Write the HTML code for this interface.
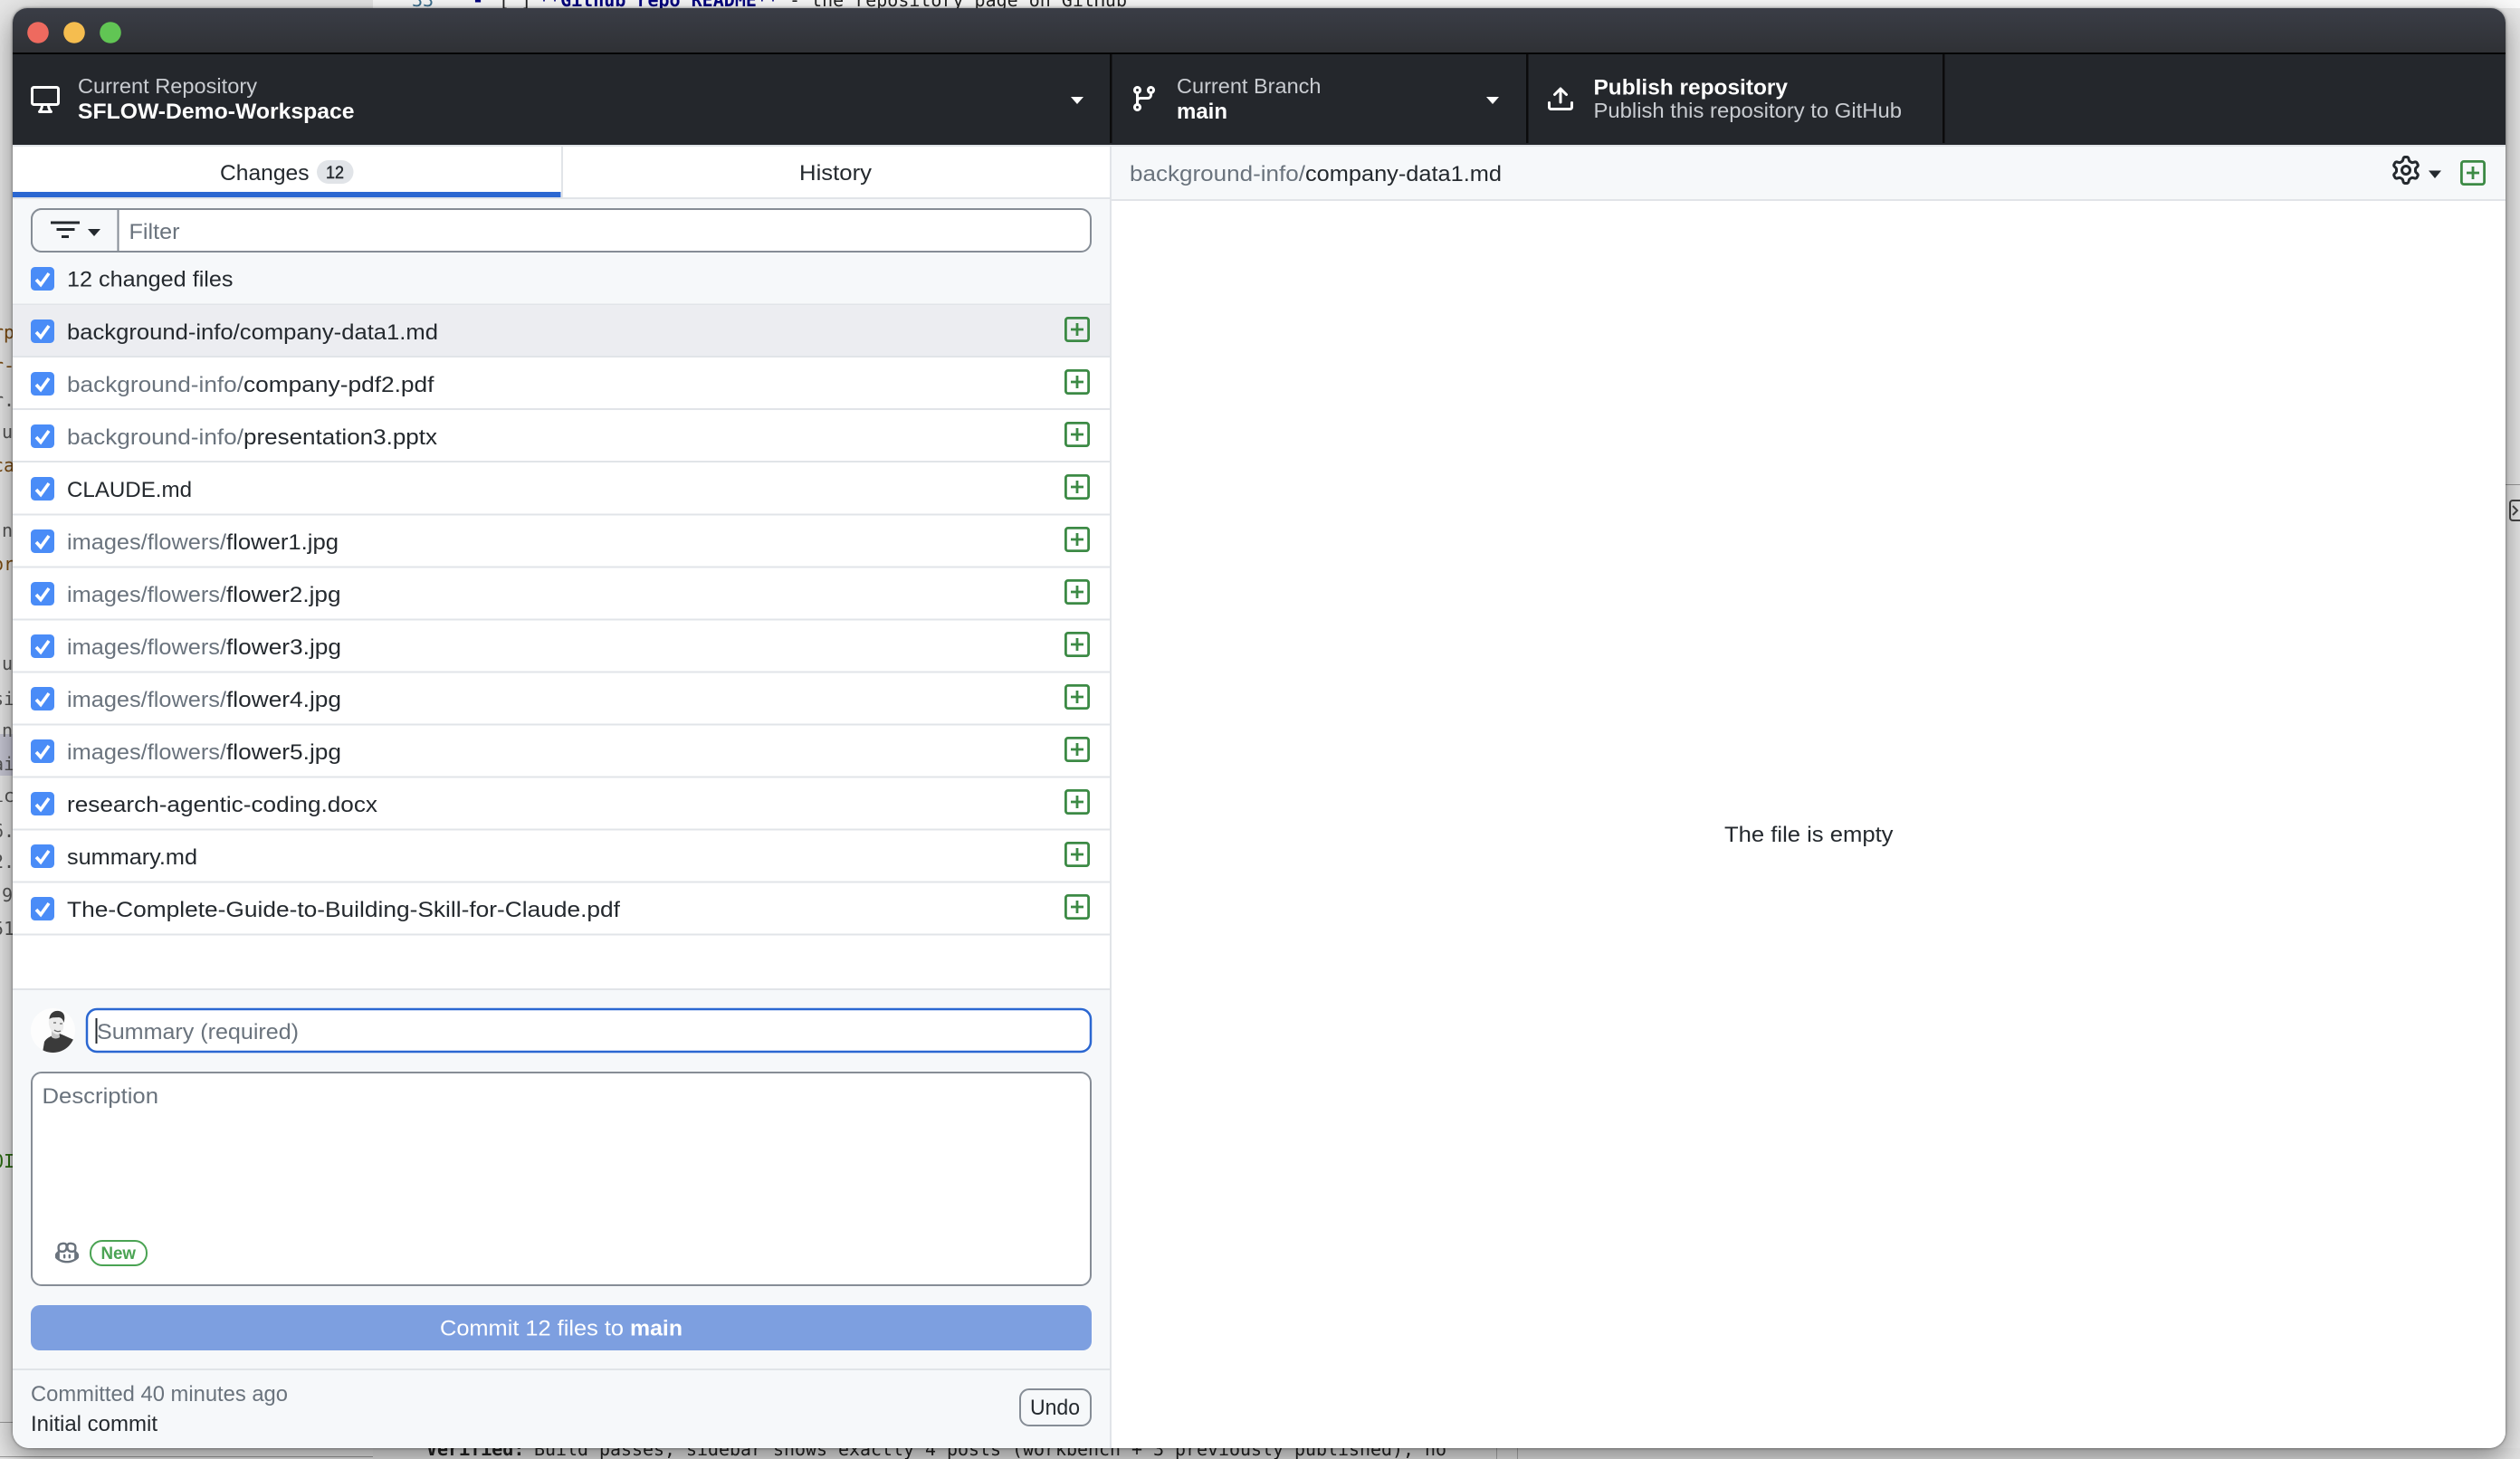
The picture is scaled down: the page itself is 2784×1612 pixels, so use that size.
<!DOCTYPE html>
<html lang="en">
<head>
<meta charset="utf-8">
<title>GitHub Desktop</title>
<style>
html,body{margin:0;padding:0;width:2784px;height:1612px;overflow:hidden;background:#ececec}
#bg{position:absolute;left:0;top:0;width:2784px;height:1612px}
#win{position:absolute;left:14px;top:9px;width:2754px;height:1591px;border-radius:16px 16px 18px 18px;overflow:hidden;background:#fff;box-shadow:0 10px 30px rgba(0,0,0,.42),0 0 3px rgba(0,0,0,.5)}
#ui{position:absolute;left:-14px;top:-9px;width:2784px;height:1612px}
text{font-family:"Liberation Sans",sans-serif;font-size:24px;fill:#24292e}
.m{font-family:"DejaVu Sans Mono",monospace;font-size:20px}
.b{font-weight:700}
.g{fill:#6a737d}
.h{fill:#c9ccd1;font-size:23.5px}
.w{fill:#fff}
</style>
</head>
<body>
<svg id="bg" viewBox="0 0 2784 1612" xmlns="http://www.w3.org/2000/svg">
<rect width="2784" height="1612" fill="#e6e6e6"/>
<rect x="412" y="0" width="2372" height="9" fill="#fafafa"/>
<rect x="412" y="1600" width="2372" height="12" fill="#e2e2e2"/>
<rect x="0" y="1609" width="412" height="1" fill="#999"/>
<rect x="0" y="1571" width="14" height="1" fill="#999"/>
<rect x="1653" y="1600" width="1" height="12" fill="#aaa"/>
<rect x="1676" y="1600" width="1" height="12" fill="#aaa"/>
<rect x="2768" y="535" width="16" height="1" fill="#999"/>
<rect x="2773" y="553" width="20" height="22" rx="3" fill="none" stroke="#444" stroke-width="2"/>
<path d="M2776 559l5 5-5 5" fill="none" stroke="#444" stroke-width="2"/>
<text class="m" x="455" y="7" style="fill:#3a6d8c">33</text>
<text class="m b" x="522" y="7" style="fill:#00007f">-</text>
<text class="m" x="551" y="7" style="fill:#222">[ ]</text>
<text class="m b" x="595" y="7" textLength="265" lengthAdjust="spacingAndGlyphs" style="fill:#00007f">**Github repo README**</text>
<text class="m" x="872" y="7" textLength="373" lengthAdjust="spacingAndGlyphs" style="fill:#222">- the repository page on GitHub</text>
<text class="m b" x="471" y="1608" style="fill:#222">Verified:</text>
<text class="m" x="590" y="1608" textLength="1008" lengthAdjust="spacingAndGlyphs" style="fill:#222">Build passes, sidebar shows exactly 4 posts (workbench + 3 previously published), no</text>
<rect x="0" y="811" width="14" height="46" fill="#c6c6d4"/>
<g>
<text class="m" x="-8" y="374" style="fill:#7a4a10">rp</text>
<text class="m" x="-8" y="411" style="fill:#7a4a10">r-</text>
<text class="m" x="-8" y="449" style="fill:#555">r.</text>
<text class="m" x="2" y="484" style="fill:#555">u</text>
<text class="m" x="-8" y="521" style="fill:#7a4a10">ca</text>
<text class="m" x="2" y="593" style="fill:#555">n</text>
<text class="m" x="-8" y="630" style="fill:#7a4a10">or</text>
<text class="m" x="2" y="740" style="fill:#555">u</text>
<text class="m" x="-8" y="779" style="fill:#555">si</text>
<text class="m" x="2" y="814" style="fill:#555">n</text>
<text class="m" x="-8" y="851" style="fill:#555">ai</text>
<text class="m" x="-8" y="886" style="fill:#555">ic</text>
<text class="m" x="-8" y="925" style="fill:#555">6.</text>
<text class="m" x="-8" y="959" style="fill:#555">2.</text>
<text class="m" x="2" y="996" style="fill:#555">9</text>
<text class="m" x="-8" y="1033" style="fill:#555">51</text>
<text class="m" x="-8" y="1290" style="fill:#2a6a10">OI</text>
</g>
</svg>

<div id="win">
<svg id="ui" viewBox="0 0 2784 1612" xmlns="http://www.w3.org/2000/svg">
<defs>
<linearGradient id="tb" x1="0" y1="0" x2="0" y2="1"><stop offset="0" stop-color="#3a3d46"/><stop offset="1" stop-color="#2f3135"/></linearGradient>
<symbol id="cb" width="26" height="26" viewBox="0 0 26 26" overflow="visible">
<rect width="26" height="26" rx="4.5" fill="#4a8cf7"/>
<path d="M6 14l5 5.5L20 7" fill="none" stroke="#fff" stroke-width="3.6"/>
</symbol>
<symbol id="pl" width="28" height="28" viewBox="0 0 28 28" overflow="visible">
<rect x="1.4" y="1.4" width="25.2" height="25.2" rx="2.5" fill="none" stroke="#3c8a45" stroke-width="2.8"/>
<path d="M7 14h14M14 7v14" fill="none" stroke="#3c8a45" stroke-width="2.8"/>
</symbol>
</defs>

<!-- title bar -->
<rect x="14" y="9" width="2754" height="50" fill="url(#tb)"/>
<rect x="14" y="58" width="2754" height="2" fill="#050505"/>
<circle cx="42" cy="36" r="11.8" fill="#ee6a5f"/>
<circle cx="82" cy="36" r="11.8" fill="#f5bd4f"/>
<circle cx="122" cy="36" r="11.8" fill="#61c554"/>

<!-- toolbar -->
<rect x="14" y="60" width="2754" height="100" fill="#24272c"/>
<rect x="1226" y="60" width="2.5" height="98" fill="#0b0b0c"/>
<rect x="1686" y="60" width="2.5" height="98" fill="#0b0b0c"/>
<rect x="2146" y="60" width="2.5" height="98" fill="#0b0b0c"/>

<path transform="translate(34 93) scale(2)" fill="#fff" d="M14.25 1c.966 0 1.75.784 1.75 1.75v7.5A1.75 1.75 0 0 1 14.25 12h-3.727c.099 1.041.52 1.872 1.292 2.757A.752.752 0 0 1 11.25 16h-6.5a.75.75 0 0 1-.565-1.243c.772-.885 1.192-1.716 1.292-2.757H1.75A1.75 1.75 0 0 1 0 10.25v-7.5C0 1.784.784 1 1.75 1ZM1.75 2.5a.25.25 0 0 0-.25.25v7.5c0 .138.112.25.25.25h12.5a.25.25 0 0 0 .25-.25v-7.5a.25.25 0 0 0-.25-.25ZM9.018 12H6.982a5.293 5.293 0 0 1-.765 2.5h3.566a5.293 5.293 0 0 1-.765-2.5Z"/>
<text class="h" x="86" y="103" textLength="198" lengthAdjust="spacingAndGlyphs">Current Repository</text>
<text class="w b" x="86" y="131" textLength="305.5" lengthAdjust="spacingAndGlyphs">SFLOW-Demo-Workspace</text>
<path d="M1183 107h14l-7 8z" fill="#fff"/>

<path transform="translate(1248 93) scale(2)" fill="#fff" d="M9.5 3.25a2.25 2.25 0 1 1 3 2.122V6A2.5 2.5 0 0 1 10 8.5H6a1 1 0 0 0-1 1v1.128a2.251 2.251 0 1 1-1.5 0V5.372a2.25 2.25 0 1 1 1.5 0v1.836A2.493 2.493 0 0 1 6 7h4a1 1 0 0 0 1-1v-.628A2.25 2.25 0 0 1 9.5 3.25Zm-6 0a.75.75 0 1 0 1.5 0 .75.75 0 0 0-1.5 0Zm8.25-.75a.75.75 0 1 0 0 1.5.75.75 0 0 0 0-1.5ZM4.25 12a.75.75 0 1 0 0 1.5.75.75 0 0 0 0-1.5Z"/>
<text class="h" x="1300" y="103" textLength="159.5" lengthAdjust="spacingAndGlyphs">Current Branch</text>
<text class="w b" x="1300" y="131" textLength="56" lengthAdjust="spacingAndGlyphs">main</text>
<path d="M1642 107h14l-7 8z" fill="#fff"/>

<g transform="translate(1708 94) scale(2)" fill="#fff">
<path d="M2.75 14A1.75 1.75 0 0 1 1 12.25v-2.5a.75.75 0 0 1 1.5 0v2.5c0 .138.112.25.25.25h10.5a.25.25 0 0 0 .25-.25v-2.5a.75.75 0 0 1 1.5 0v2.5A1.75 1.75 0 0 1 13.25 14Z"/>
<path d="M11.78 4.72a.749.749 0 1 1-1.06 1.06L8.75 3.811V9.5a.75.75 0 0 1-1.5 0V3.811L5.28 5.78a.749.749 0 1 1-1.06-1.06l3.25-3.25a.749.749 0 0 1 1.06 0l3.25 3.25Z"/>
</g>
<text class="w b" x="1760.5" y="104.5" textLength="214.5" lengthAdjust="spacingAndGlyphs">Publish repository</text>
<text class="h" x="1760.5" y="130" textLength="340.5" lengthAdjust="spacingAndGlyphs">Publish this repository to GitHub</text>

<!-- strip under toolbar -->
<rect x="14" y="160" width="2754" height="2" fill="#e1e4e8"/>

<!-- left panel -->
<rect x="14" y="162" width="1212" height="58" fill="#fff"/>
<rect x="14" y="218" width="1212" height="2" fill="#e1e4e8"/>
<rect x="620" y="162" width="2" height="56" fill="#e1e4e8"/>
<rect x="14" y="212" width="605.5" height="6" fill="#2b67d1"/>
<text x="243" y="199" textLength="98.5" lengthAdjust="spacingAndGlyphs">Changes</text>
<rect x="350" y="177" width="40.5" height="26" rx="13" fill="#e1e4e8"/>
<text x="360" y="197" textLength="20" lengthAdjust="spacingAndGlyphs" style="font-size:19px;stroke:#24292e;stroke-width:.4">12</text>
<text x="883" y="199" textLength="80" lengthAdjust="spacingAndGlyphs">History</text>

<rect x="14" y="220" width="1212" height="117" fill="#f6f8fa"/>
<rect x="35" y="231" width="1170" height="47" rx="11" fill="#fff" stroke="#868d96" stroke-width="2"/>
<path d="M46 231H130.500V278H46a11 11 0 0 1-11-11V242a11 11 0 0 1 11-11Z" fill="#f6f8fa" stroke="#868d96" stroke-width="2"/>
<path d="M56 246h32M62.500 253.500h20M68 261.500h8" fill="none" stroke="#24292e" stroke-width="3"/>
<path d="M97 253h14l-7 8z" fill="#24292e"/>
<text class="g" x="142.5" y="264" textLength="56" lengthAdjust="spacingAndGlyphs">Filter</text>
<use href="#cb" x="34" y="295"/>
<text x="74" y="316.500" textLength="183.5" lengthAdjust="spacingAndGlyphs">12 changed files</text>
<rect x="14" y="335.500" width="1212" height="2" fill="#e1e4e8"/>

<!-- file list -->
<rect x="14" y="337" width="1212" height="755" fill="#fff"/>
<rect x="14" y="337" width="1212" height="56" fill="#ecedf1"/>
<g fill="#e1e4e8">
<rect x="14" y="393" width="1212" height="2"/>
<rect x="14" y="451" width="1212" height="2"/>
<rect x="14" y="509" width="1212" height="2"/>
<rect x="14" y="567.500" width="1212" height="2"/>
<rect x="14" y="625.500" width="1212" height="2"/>
<rect x="14" y="683.500" width="1212" height="2"/>
<rect x="14" y="741.500" width="1212" height="2"/>
<rect x="14" y="799.500" width="1212" height="2"/>
<rect x="14" y="857.500" width="1212" height="2"/>
<rect x="14" y="915.500" width="1212" height="2"/>
<rect x="14" y="973.500" width="1212" height="2"/>
<rect x="14" y="1031.500" width="1212" height="2"/>
</g>

<use href="#cb" x="34" y="353"/><use href="#pl" x="1176" y="350"/>
<text x="74" y="375" textLength="410" lengthAdjust="spacingAndGlyphs">background-info/company-data1.md</text>

<use href="#cb" x="34" y="411"/><use href="#pl" x="1176" y="408"/>
<text class="g" x="74" y="433" textLength="195" lengthAdjust="spacingAndGlyphs">background-info/</text>
<text x="269" y="433" textLength="210.500" lengthAdjust="spacingAndGlyphs">company-pdf2.pdf</text>

<use href="#cb" x="34" y="469"/><use href="#pl" x="1176" y="466"/>
<text class="g" x="74" y="491" textLength="195" lengthAdjust="spacingAndGlyphs">background-info/</text>
<text x="269" y="491" textLength="214" lengthAdjust="spacingAndGlyphs">presentation3.pptx</text>

<use href="#cb" x="34" y="527"/><use href="#pl" x="1176" y="524"/>
<text x="74" y="549" textLength="138" lengthAdjust="spacingAndGlyphs">CLAUDE.md</text>

<use href="#cb" x="34" y="585"/><use href="#pl" x="1176" y="582"/>
<text class="g" x="74" y="607" textLength="176" lengthAdjust="spacingAndGlyphs">images/flowers/</text>
<text x="250" y="607" textLength="124" lengthAdjust="spacingAndGlyphs">flower1.jpg</text>

<use href="#cb" x="34" y="643"/><use href="#pl" x="1176" y="640"/>
<text class="g" x="74" y="665" textLength="176" lengthAdjust="spacingAndGlyphs">images/flowers/</text>
<text x="250" y="665" textLength="126.5" lengthAdjust="spacingAndGlyphs">flower2.jpg</text>

<use href="#cb" x="34" y="701"/><use href="#pl" x="1176" y="698"/>
<text class="g" x="74" y="723" textLength="176" lengthAdjust="spacingAndGlyphs">images/flowers/</text>
<text x="250" y="723" textLength="127" lengthAdjust="spacingAndGlyphs">flower3.jpg</text>

<use href="#cb" x="34" y="759"/><use href="#pl" x="1176" y="756"/>
<text class="g" x="74" y="781" textLength="176" lengthAdjust="spacingAndGlyphs">images/flowers/</text>
<text x="250" y="781" textLength="127" lengthAdjust="spacingAndGlyphs">flower4.jpg</text>

<use href="#cb" x="34" y="817"/><use href="#pl" x="1176" y="814"/>
<text class="g" x="74" y="839" textLength="176" lengthAdjust="spacingAndGlyphs">images/flowers/</text>
<text x="250" y="839" textLength="127" lengthAdjust="spacingAndGlyphs">flower5.jpg</text>

<use href="#cb" x="34" y="875"/><use href="#pl" x="1176" y="872"/>
<text x="74" y="897" textLength="343" lengthAdjust="spacingAndGlyphs">research-agentic-coding.docx</text>

<use href="#cb" x="34" y="933"/><use href="#pl" x="1176" y="930"/>
<text x="74" y="955" textLength="144" lengthAdjust="spacingAndGlyphs">summary.md</text>

<use href="#cb" x="34" y="991"/><use href="#pl" x="1176" y="988"/>
<text x="74" y="1013" textLength="611" lengthAdjust="spacingAndGlyphs">The-Complete-Guide-to-Building-Skill-for-Claude.pdf</text>

<!-- commit panel -->
<rect x="14" y="1092" width="1212" height="508" fill="#f6f8fa"/>
<rect x="14" y="1092" width="1212" height="2" fill="#e1e4e8"/>
<circle cx="58.500" cy="1138.500" r="24.500" fill="#fdfdfd"/>
<clipPath id="av"><circle cx="58.500" cy="1138.500" r="24.500"/></clipPath>
<g clip-path="url(#av)">
<path d="M47 1163l2-12c3-5 8-6 11-8l6-1c5 2 11 5 16 7l-3 14z" fill="#3a3a3a"/>
<path d="M57 1136l8 2 1 8c-3 2-6 2-9 0z" fill="#c4c4c4"/>
<ellipse cx="62" cy="1131" rx="8" ry="12" fill="#ececec" transform="rotate(-12 62 1131)"/>
<path d="M54.500 1126c0-6 5-10 10.500-9 6 1 7.500 6 5.500 13-1-4-3-6-6-6-4 .5-7-.5-10 2z" fill="#3a3a3a"/>
<path d="M59 1130h3M66 1131h3M60 1138c2 2 5 2 7 1" fill="none" stroke="#666" stroke-width="1.300"/>
</g>
<rect x="96" y="1115" width="1109" height="47" rx="11" fill="#fff" stroke="#2b67d1" stroke-width="2.500"/>
<text class="g" x="107" y="1148" textLength="223" lengthAdjust="spacingAndGlyphs">Summary (required)</text>
<rect x="105.500" y="1125" width="2" height="28" fill="#24292e"/>
<rect x="35" y="1185" width="1170" height="235" rx="11" fill="#fff" stroke="#868d96" stroke-width="2"/>
<text class="g" x="46.5" y="1219" textLength="128.5" lengthAdjust="spacingAndGlyphs">Description</text>
<g transform="translate(61 1371) scale(1.625)" fill="#6a737d">
<path d="M7.998 15.035c-4.562 0-7.873-2.914-7.998-3.749V9.338c.085-.628.677-1.686 1.588-2.065.013-.07.024-.143.036-.218.029-.183.06-.384.126-.612-.201-.508-.254-1.084-.254-1.656 0-.87.128-1.769.693-2.484.579-.733 1.494-1.124 2.724-1.261 1.206-.134 2.262.034 2.944.765.05.053.096.108.139.165.044-.057.094-.112.143-.165.682-.731 1.738-.899 2.944-.765 1.23.137 2.145.528 2.724 1.261.566.715.693 1.614.693 2.484 0 .572-.053 1.148-.254 1.656.066.228.098.429.126.612.012.076.024.148.037.218.924.385 1.522 1.471 1.591 2.095v1.872c0 .766-3.351 3.795-8.002 3.795Zm0-1.485c2.28 0 4.584-1.11 5.002-1.433V7.862l-.023-.116c-.49.21-1.075.291-1.727.291-1.146 0-2.059-.327-2.71-.991A3.222 3.222 0 0 1 8 6.303a3.24 3.24 0 0 1-.544.743c-.65.664-1.563.991-2.71.991-.652 0-1.236-.081-1.727-.291l-.023.116v4.255c.419.323 2.722 1.433 5.002 1.433ZM6.762 2.83c-.193-.206-.637-.413-1.682-.297-1.019.113-1.479.404-1.713.7-.247.312-.369.789-.369 1.554 0 .793.129 1.171.308 1.371.162.181.519.379 1.442.379.853 0 1.339-.235 1.638-.54.315-.322.527-.827.617-1.553.117-.935-.037-1.395-.241-1.614Zm4.155-.297c-1.044-.116-1.488.091-1.681.297-.204.219-.359.679-.242 1.614.091.726.303 1.231.618 1.553.299.305.784.54 1.638.54.922 0 1.28-.198 1.442-.379.179-.2.308-.578.308-1.371 0-.765-.123-1.242-.37-1.554-.233-.296-.693-.587-1.713-.7Z"/>
<path d="M6.25 9.037a.75.75 0 0 1 .75.75v1.501a.75.75 0 0 1-1.5 0V9.787a.75.75 0 0 1 .75-.75Zm4.25.75v1.501a.75.75 0 0 1-1.5 0V9.787a.75.75 0 0 1 1.500 0Z"/>
</g>
<rect x="100" y="1371" width="62" height="27" rx="13" fill="#fff" stroke="#4aa353" stroke-width="2"/>
<text class="b" x="111.500" y="1391" textLength="38.500" lengthAdjust="spacingAndGlyphs" style="font-size:19px;fill:#4aa353">New</text>
<rect x="34" y="1442" width="1172" height="50" rx="10" fill="#7d9fe0"/>
<text class="w" x="486" y="1475.500" textLength="203" lengthAdjust="spacingAndGlyphs">Commit 12 files to</text>
<text class="w b" x="696" y="1475.500" textLength="58" lengthAdjust="spacingAndGlyphs">main</text>
<rect x="14" y="1512" width="1212" height="2" fill="#e1e4e8"/>
<text class="g" x="34" y="1548" textLength="284" lengthAdjust="spacingAndGlyphs">Committed 40 minutes ago</text>
<text x="34" y="1581" textLength="140" lengthAdjust="spacingAndGlyphs">Initial commit</text>
<rect x="1127" y="1535" width="78" height="40" rx="10" fill="#f6f8fa" stroke="#868d96" stroke-width="2"/>
<text x="1138" y="1563" textLength="55" lengthAdjust="spacingAndGlyphs">Undo</text>

<!-- right panel -->
<rect x="1226" y="162" width="2" height="1438" fill="#e1e4e8"/>
<rect x="1228" y="162" width="1540" height="58" fill="#f6f8fa"/>
<rect x="1228" y="220" width="1540" height="2" fill="#e1e4e8"/>
<rect x="1228" y="222" width="1540" height="1378" fill="#fff"/>
<text class="g" x="1248" y="200" textLength="194" lengthAdjust="spacingAndGlyphs">background-info/</text>
<text x="1442" y="200" textLength="217" lengthAdjust="spacingAndGlyphs">company-data1.md</text>
<path transform="translate(2642 172) scale(2)" fill="#24292e" d="M8 0a8.2 8.2 0 0 1 .701.031C9.444.095 9.99.645 10.16 1.29l.288 1.107c.018.066.079.158.212.224.231.114.454.243.668.386.123.082.233.09.299.071l1.103-.303c.644-.176 1.392.021 1.82.63.27.385.506.792.704 1.218.315.675.111 1.422-.364 1.891l-.814.806c-.049.048-.098.147-.088.294.016.257.016.515 0 .772-.01.147.038.246.088.294l.814.806c.475.469.679 1.216.364 1.891a7.977 7.977 0 0 1-.704 1.217c-.428.61-1.176.807-1.82.63l-1.102-.302c-.067-.019-.177-.011-.3.071a5.909 5.909 0 0 1-.668.386c-.133.066-.194.158-.211.224l-.29 1.106c-.168.646-.715 1.196-1.458 1.26a8.006 8.006 0 0 1-1.402 0c-.743-.064-1.289-.614-1.458-1.26l-.289-1.106c-.018-.066-.079-.158-.212-.224a5.738 5.738 0 0 1-.668-.386c-.123-.082-.233-.09-.299-.071l-1.103.303c-.644.176-1.392-.021-1.82-.63a8.12 8.12 0 0 1-.704-1.218c-.315-.675-.111-1.422.363-1.891l.815-.806c.05-.048.098-.147.088-.294a6.214 6.214 0 0 1 0-.772c.01-.147-.038-.246-.088-.294l-.815-.806C.635 6.045.431 5.298.746 4.623a7.92 7.92 0 0 1 .704-1.217c.428-.61 1.176-.807 1.82-.63l1.102.302c.067.019.177.011.3-.071.214-.143.437-.272.668-.386.133-.066.194-.158.211-.224l.29-1.106C6.009.645 6.556.095 7.299.03 7.53.01 7.764 0 8 0Zm-.571 1.525c-.036.003-.108.036-.137.146l-.289 1.105c-.147.561-.549.967-.998 1.189-.173.086-.34.183-.5.29-.417.278-.97.423-1.529.27l-1.103-.303c-.109-.03-.175.016-.195.045-.22.312-.412.644-.573.99-.014.031-.021.11.059.19l.815.806c.411.406.562.957.53 1.456a4.709 4.709 0 0 0 0 .582c.032.499-.119 1.05-.53 1.456l-.815.806c-.081.08-.073.159-.059.19.162.346.353.677.573.989.02.03.085.076.195.046l1.102-.303c.56-.153 1.113-.008 1.53.27.161.107.328.204.501.29.447.222.85.629.997 1.189l.289 1.105c.029.109.101.143.137.146a6.6 6.6 0 0 0 1.142 0c.036-.003.108-.036.137-.146l.289-1.105c.147-.561.549-.967.998-1.189.173-.086.34-.183.5-.29.417-.278.97-.423 1.529-.27l1.103.303c.109.029.175-.016.195-.045.22-.313.411-.644.573-.99.014-.031.021-.11-.059-.19l-.815-.806c-.411-.406-.562-.957-.53-1.456a4.709 4.709 0 0 0 0-.582c-.032-.499.119-1.05.53-1.456l.815-.806c.081-.08.073-.159.059-.19a6.464 6.464 0 0 0-.573-.989c-.02-.03-.085-.076-.195-.046l-1.102.303c-.56.153-1.113.008-1.53-.27a4.44 4.44 0 0 0-.501-.29c-.447-.222-.85-.629-.997-1.189l-.289-1.105c-.029-.11-.101-.143-.137-.146a6.6 6.6 0 0 0-1.142 0ZM11 8a3 3 0 1 1-6 0 3 3 0 0 1 6 0ZM9.5 8a1.5 1.5 0 1 0-3.001.001A1.5 1.5 0 0 0 9.5 8Z"/>
<path d="M2683 188.500h14l-7 8.500z" fill="#24292e"/>
<use href="#pl" x="2718" y="177"/>
<text x="1905" y="930" textLength="186.500" lengthAdjust="spacingAndGlyphs">The file is empty</text>
</svg>
</div>
</body>
</html>
